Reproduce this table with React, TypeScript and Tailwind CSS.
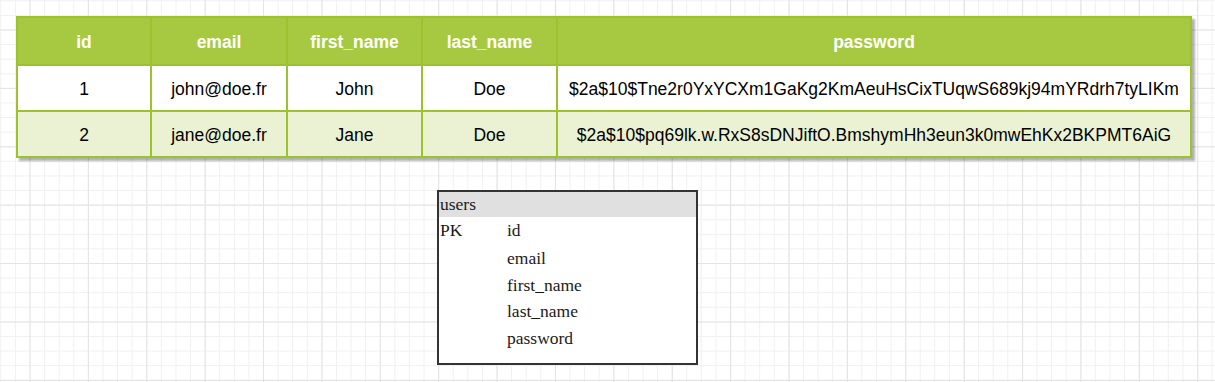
import React from "react";

const headers = ["id", "email", "first_name", "last_name", "password"];
const rows = [
  ["1", "john@doe.fr", "John", "Doe", "$2a$10$Tne2r0YxYCXm1GaKg2KmAeuHsCixTUqwS689kj94mYRdrh7tyLIKm"],
  ["2", "jane@doe.fr", "Jane", "Doe", "$2a$10$pq69lk.w.RxS8sDNJiftO.BmshymHh3eun3k0mwEhKx2BKPMT6AiG"],
];

const fields = [
  { key: "PK", name: "id" },
  { key: "", name: "email" },
  { key: "", name: "first_name" },
  { key: "", name: "last_name" },
  { key: "", name: "password" },
];

export default function App() {
  return (
    <div className="w-[1215px] h-[382px] overflow-hidden bg-white bg-[linear-gradient(to_right,#e3e3e3_1px,transparent_1px),linear-gradient(to_bottom,#e3e3e3_1px,transparent_1px),linear-gradient(to_right,#f0f0f0_1px,transparent_1px),linear-gradient(to_bottom,#f0f0f0_1px,transparent_1px)] bg-[size:58.4px_58.4px,58.4px_58.4px,14.6px_14.6px,14.6px_14.6px] bg-[position:29.5px_29.5px]">
      <div className="pt-[16px] pl-[16px]">
        <div className="w-[1176px] bg-[#9cc22e] p-[2px] shadow-[3px_3px_2px_rgba(0,0,0,0.3)] grid grid-cols-[132px_134px_133px_133px_632px] grid-rows-[46px_44px_44px] gap-[2px] font-['Liberation_Sans',Arial,sans-serif] text-[17.5px]">
          {headers.map((h) => (
            <div key={h} className="bg-[#a7c942] text-white font-bold flex items-center justify-center pt-[2px]">
              {h}
            </div>
          ))}
          {rows.map((r, i) =>
            r.map((c, j) => (
              <div
                key={`${i}-${j}`}
                className={`${i === 1 ? "bg-[#eaf2d3]" : "bg-white"} text-black flex items-center justify-center whitespace-nowrap pt-[2px]`}
              >
                {c}
              </div>
            ))
          )}
        </div>
        <div className="ml-[421px] mt-[32px] w-[261px] h-[175px] border-2 border-[#333333] bg-white font-['Liberation_Serif','Times_New_Roman',serif] text-[17.5px] text-[#1a1a1a]">
          <div className="h-[25px] bg-[#e0e0e0] pl-[1px] flex items-center">users</div>
          <div>
            {fields.map((f, i) => (
              <div key={f.name} className={`flex items-center ${i === 0 ? "h-[28px] pb-[2px]" : "h-[26.5px]"}`}>
                <span className="w-[68px] pl-[1px]">{f.key}</span>
                <span>{f.name}</span>
              </div>
            ))}
          </div>
        </div>
      </div>
    </div>
  );
}
